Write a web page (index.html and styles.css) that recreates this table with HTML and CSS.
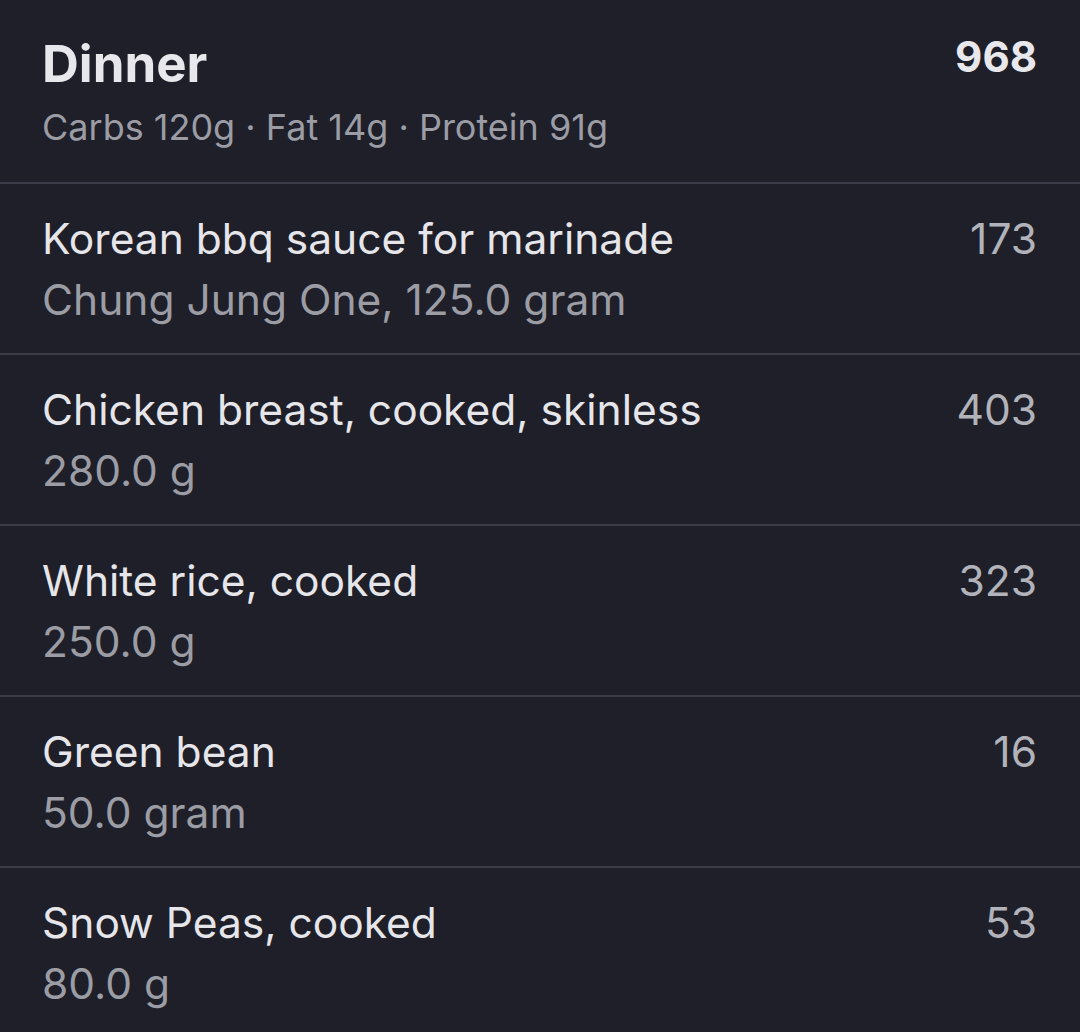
FILE: index.html
```html
<!DOCTYPE html>
<html>
<head>
<meta charset="utf-8">
<link rel="stylesheet" href="styles.css">
</head>
<body>
<div class="meal">
  <div class="meal-head">
    <div class="meal-info">
      <div class="meal-title">Dinner</div>
      <div class="meal-macros">Carbs 120g · Fat 14g · Protein 91g</div>
    </div>
    <div class="meal-total">968</div>
  </div>
  <div class="item">
    <div class="item-info">
      <div class="item-name">Korean bbq sauce for marinade</div>
      <div class="item-sub">Chung Jung One, 125.0 gram</div>
    </div>
    <div class="item-cal">173</div>
  </div>
  <div class="item">
    <div class="item-info">
      <div class="item-name">Chicken breast, cooked, skinless</div>
      <div class="item-sub">280.0 g</div>
    </div>
    <div class="item-cal">403</div>
  </div>
  <div class="item">
    <div class="item-info">
      <div class="item-name">White rice, cooked</div>
      <div class="item-sub">250.0 g</div>
    </div>
    <div class="item-cal">323</div>
  </div>
  <div class="item">
    <div class="item-info">
      <div class="item-name">Green bean</div>
      <div class="item-sub">50.0 gram</div>
    </div>
    <div class="item-cal">16</div>
  </div>
  <div class="item">
    <div class="item-info">
      <div class="item-name">Snow Peas, cooked</div>
      <div class="item-sub">80.0 g</div>
    </div>
    <div class="item-cal">53</div>
  </div>
</div>
</body>
</html>
```
FILE: styles.css
```css
html, body {
  margin: 0;
  padding: 0;
  background: #1e1f29;
}
body {
  font-family: Inter, "Noto Sans", sans-serif;
  width: 1080px;
  height: 1032px;
  overflow: hidden;
}
.meal-head {
  display: flex;
  justify-content: space-between;
  align-items: flex-start;
  padding: 33px 43px 0 42px;
  height: 149px;
  border-bottom: 2px solid #3a3b46;
}
.meal-title {
  font-size: 51px;
  font-weight: 700;
  color: #e8e8ec;
  line-height: 62px;
}
.meal-macros {
  font-size: 36px;
  color: #9b9ca4;
  line-height: 40px;
  margin-top: 12px;
}
.meal-total {
  font-size: 42px;
  font-weight: 700;
  color: #e8e8ec;
  line-height: 50px;
  margin-top: -1px;
}
.item {
  display: flex;
  justify-content: space-between;
  align-items: flex-start;
  padding: 29px 43px 0 42px;
  height: 140px;
  border-bottom: 2px solid #3a3b46;
}
.item-name {
  font-size: 42.5px;
  color: #e6e6ea;
  line-height: 52px;
}
.item-sub {
  font-size: 42.5px;
  color: #9b9ca4;
  line-height: 52px;
  margin-top: 9px;
}
.item-cal {
  font-size: 42.5px;
  color: #b2b3ba;
  line-height: 52px;
}
```
